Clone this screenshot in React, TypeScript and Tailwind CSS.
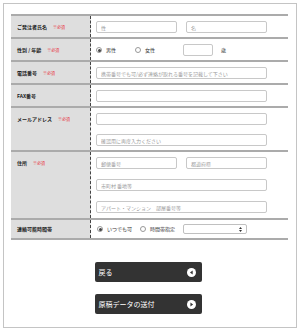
import React from "react";

const font = { fontFamily: '"Noto Sans CJK JP", "Noto Sans", sans-serif' };

function Required() {
  return <span className="ml-[6px] text-[4px] font-normal text-[#e8333f]">※必須</span>;
}

function Label({ text, required }: { text: string; required?: boolean }) {
  return (
    <div className="w-[80px] shrink-0 bg-[#dedede] border-r border-dashed border-[#444] pl-[6px] pt-[5px] pb-[4px]">
      <div className="h-[12px] flex items-center text-[5px] font-bold text-[#222]">
        {text}
        {required && <Required />}
      </div>
    </div>
  );
}

function Field({ placeholder, w = "w-[171px]" }: { placeholder?: string; w?: string }) {
  return (
    <input
      placeholder={placeholder}
      autoComplete="off"
      spellCheck={false}
      className={`${w} h-[12px] rounded-[2px] border border-[#c8c8c8] bg-white px-[4px] text-[5px] text-[#333] placeholder:text-[#9a9a9a] outline-none`}
    />
  );
}

function Radio({ label, checked }: { label: string; checked?: boolean }) {
  return (
    <div className="flex items-center gap-[4px]">
      <span className="w-[6px] h-[6px] rounded-full border border-[#999] bg-white flex items-center justify-center">
        {checked && <span className="w-[3px] h-[3px] rounded-full bg-[#444]" />}
      </span>
      <span className="text-[5px] text-[#333]">{label}</span>
    </div>
  );
}

function Row({
  label,
  required,
  children,
}: {
  label: string;
  required?: boolean;
  children: React.ReactNode;
}) {
  return (
    <div className="flex border-b-2 border-[#ababab]">
      <Label text={label} required={required} />
      <div className="flex-1 pl-[5px] pt-[5px] pb-[4px] flex flex-col gap-[9px]">{children}</div>
    </div>
  );
}

function Button({ text, dir }: { text: string; dir: "left" | "right" }) {
  return (
    <button className="w-[107px] h-[20px] rounded-[2px] bg-[#333] flex items-center justify-between pl-[4px] pr-[6px] text-white text-[7px]">
      <span>{text}</span>
      <svg width="9" height="9" viewBox="0 0 10 10">
        <circle cx="5" cy="5" r="5" fill="#fff" />
        {dir === "left" ? (
          <polygon points="6.3,2.8 6.3,7.2 3.3,5" fill="#333" />
        ) : (
          <polygon points="3.8,2.8 3.8,7.2 6.8,5" fill="#333" />
        )}
      </svg>
    </button>
  );
}

export default function App() {
  return (
    <div className="w-[300px] h-[331px] bg-white p-[3px]" style={font}>
      <div className="h-[325px] border border-[#c4c4c4] pt-[10px] pl-[7px] pr-[8px]">
        <div className="border-t-2 border-[#ababab]">
          <Row label="ご発注者氏名" required>
            <div className="flex gap-[9px]">
              <Field placeholder="性" w="w-[81px]" />
              <Field placeholder="名" w="w-[81px]" />
            </div>
          </Row>
          <Row label="性別 / 年齢" required>
            <div className="flex items-center h-[12px]">
              <Radio label="男性" checked />
              <div className="ml-[19px]">
                <Radio label="女性" />
              </div>
              <Field w="w-[30px] ml-[28px]" />
              <span className="ml-[8px] text-[5px] text-[#333]">歳</span>
            </div>
          </Row>
          <Row label="電話番号" required>
            <Field placeholder="携帯番号でも可/必ず連絡が取れる番号を記載して下さい" />
          </Row>
          <Row label="FAX番号">
            <Field />
          </Row>
          <Row label="メールアドレス" required>
            <Field />
            <Field placeholder="確認用に再度入力ください" />
          </Row>
          <div className="flex border-b-2 border-[#ababab]">
            <Label text="住所" required />
            <div className="flex-1 pl-[5px] pt-[5px] pb-[5px] flex flex-col gap-[10px]">
              <div className="flex gap-[9px]">
                <Field placeholder="郵便番号" w="w-[81px]" />
                <Field placeholder="都道府県" w="w-[81px]" />
              </div>
              <Field placeholder="市町村 番地等" />
              <Field placeholder="アパート・マンション　部屋番号等" />
            </div>
          </div>
          <div className="flex border-b-2 border-[#ababab]">
            <div className="w-[80px] shrink-0 bg-[#dedede] border-r border-dashed border-[#444] pl-[6px] flex items-center h-[18px]">
              <span className="text-[5px] font-bold text-[#222]">連絡可能時間帯</span>
            </div>
            <div className="flex-1 pl-[6px] flex items-center h-[18px]">
              <Radio label="いつでも可" checked />
              <div className="ml-[8px]">
                <Radio label="時間帯指定" />
              </div>
              <div className="ml-[8px] w-[64px] h-[10px] rounded-[2px] border border-[#c0c0c0] bg-white flex items-center justify-end pr-[4px]">
                <svg width="3" height="5" viewBox="0 0 3 5">
                  <polygon points="1.5,0 3,2 0,2" fill="#333" />
                  <polygon points="0,3 3,3 1.5,5" fill="#333" />
                </svg>
              </div>
            </div>
          </div>
        </div>
        <div className="flex flex-col items-center gap-[12px] mt-[22px] pr-[3px]">
          <Button text="戻る" dir="left" />
          <Button text="原稿データの送付" dir="right" />
        </div>
      </div>
    </div>
  );
}
